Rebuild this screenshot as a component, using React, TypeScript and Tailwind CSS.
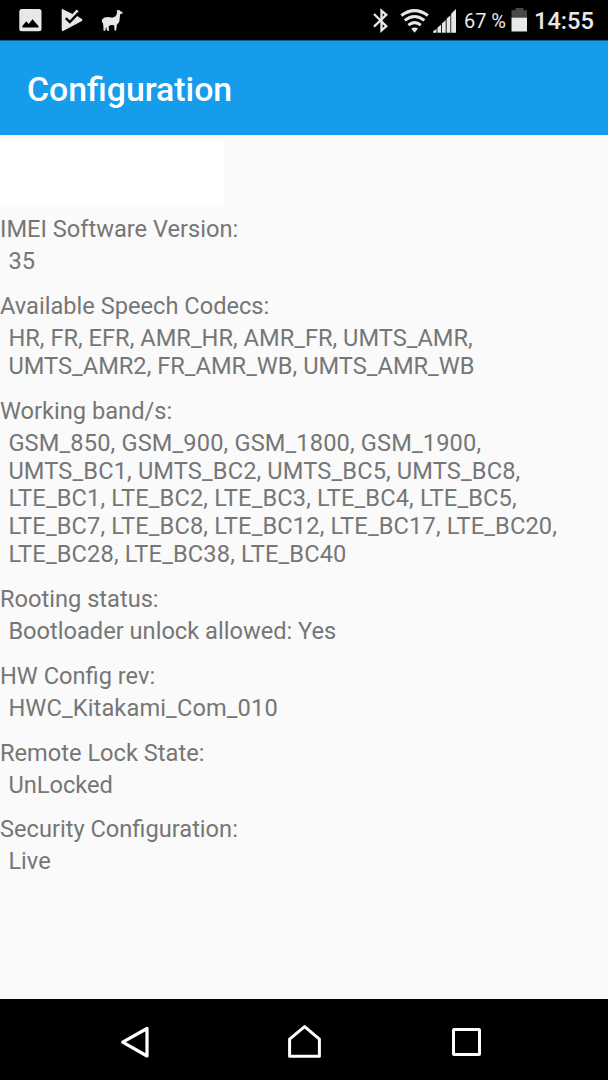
const sections = [
  { label: "IMEI Software Version:", lines: ["35"] },
  {
    label: "Available Speech Codecs:",
    lines: [
      "HR, FR, EFR, AMR_HR, AMR_FR, UMTS_AMR,",
      "UMTS_AMR2, FR_AMR_WB, UMTS_AMR_WB",
    ],
    tracking: "tracking-[0.02px]",
  },
  {
    label: "Working band/s:",
    lines: [
      "GSM_850, GSM_900, GSM_1800, GSM_1900,",
      "UMTS_BC1, UMTS_BC2, UMTS_BC5, UMTS_BC8,",
      "LTE_BC1, LTE_BC2, LTE_BC3, LTE_BC4, LTE_BC5,",
      "LTE_BC7, LTE_BC8, LTE_BC12, LTE_BC17, LTE_BC20,",
      "LTE_BC28, LTE_BC38, LTE_BC40",
    ],
    tracking: "tracking-[0.14px]",
  },
  { label: "Rooting status:", lines: ["Bootloader unlock allowed: Yes"] },
  {
    label: "HW Config rev:",
    lines: ["HWC_Kitakami_Com_010"],
    tracking: "tracking-[0.12px]",
  },
  { label: "Remote Lock State:", lines: ["UnLocked"] },
  { label: "Security Configuration:", lines: ["Live"] },
];

const StatusBar = () => {
  return (
    <div className="flex h-10 shrink-0 items-center bg-black text-[#e8e8e8]">
      <svg className="ml-[19px] h-10 w-[23px]" viewBox="19 0 23 40">
        <rect x="19.3" y="9" width="22.2" height="22.3" rx="2.5" fill="#e8e8e8" />
        <path
          d="M22.3 27.6v-1.6l4-4.7 2.4 2.8 3.8-4.8 6 6.7v1.6Z"
          fill="#000"
        />
      </svg>
      <svg className="ml-[19px] h-10 w-[22px]" viewBox="61 0 22 40">
        <path
          d="M62.8 9.2 72.6 14l4-4.4 2 2-1.8 4.2 5.1 3.3q1 1 0 1.9L63.6 30.8q-1.9.7-1.9-1V10.1q0-1.3 1.1-.9Z"
          fill="#e8e8e8"
        />
        <path
          d="m65.8 18.2 4 3.8 8.8-9.2"
          fill="none"
          stroke="#000"
          strokeWidth="2.4"
        />
      </svg>
      <svg className="ml-[17px] h-10 w-6" viewBox="100 0 24 40">
        <path
          d="m116.7 9.7 1.4.8 1.2-.8.7 1.3 2.4.9.1 1.6-2.4.7-.4 4.4-.5 3.4-2.2 2.6-.9 6h-1.6l-.3-5.3-3.4-.2-2.1 1.1.3 4.6h-1.8l-1.2-4-.7 4h-1.8l-.1-4.1-.4-3.5-1.2-1.4.3-2.2 2.3-2 4-.5 4 .6 3.2-1.4 1.5-3.2Z"
          fill="#e8e8e8"
        />
      </svg>
      <svg
        className="ml-[248px] h-10 w-[18px]"
        viewBox="372 0 18 40"
        fill="none"
        stroke="#e8e8e8"
        strokeWidth="2.3"
      >
        <path d="m374 14 12.3 12.1-4.8 4.4V10.8l4.8 4L374 26.7" />
      </svg>
      <svg className="ml-[10px] h-10 w-[30px]" viewBox="400 0 30 40">
        <g fill="none" stroke="#e8e8e8" strokeWidth="3">
          <path d="M401.3 15.5q13.2-9.7 26.6 0" />
          <path d="M404.8 20.4q9.7-7.8 19.6 0" />
          <path d="M408.4 25.1q6.2-4.9 12.4 0" />
        </g>
        <path d="M411.2 28.6q3.4-2.2 6.8 0l-3.4 4.2Z" fill="#e8e8e8" />
      </svg>
      <svg
        className="ml-[3px] h-10 w-6"
        viewBox="433 0 24 40"
        fill="#e8e8e8"
      >
        <path d="M433 32.8v-1.3l3.5-2.8v4.1ZM437.4 32.8v-5l3.7-3.4v8.4ZM442 32.8v-9.4l3.7-3.4v12.8ZM446.6 32.8V18.7l3.8-3.4v17.5ZM451.2 32.8V13.8l4.8-4.7v23.7Z" />
      </svg>
      <span className="ml-[7px] w-[41px] whitespace-nowrap pt-[2px] text-[20px] leading-[38px] tracking-[-0.1px]">
        67 %
      </span>
      <svg className="ml-[6px] h-10 w-4" viewBox="511.5 0 16 40">
        <path d="M512 10.3h4V8h8v2.3h4V18h-16Z" fill="#484848" />
        <path d="M512 17.7h16v13.8h-16Z" fill="#e8e8e8" />
      </svg>
      <span className="ml-[7px] pt-[3px] text-[23.64px] font-medium leading-[37px]">
        14:55
      </span>
    </div>
  );
};

const NavigationBar = () => {
  return (
    <div className="flex h-[81px] shrink-0 items-center bg-black pl-[120px] pt-[5px]">
      <svg
        className="h-9 w-[31px]"
        viewBox="120 1024 31 36"
        fill="none"
        stroke="#fff"
        strokeWidth="3.2"
        strokeLinejoin="round"
      >
        <path d="M147 1028.5v27.5l-24.3-13.8Z" />
      </svg>
      <svg
        className="ml-[136px] h-9 w-9"
        viewBox="287 1024 36 36"
        fill="none"
        stroke="#fff"
        strokeWidth="3"
        strokeLinejoin="round"
      >
        <path d="M289.6 1056.3v-17.2l15-12.5 14.8 12.5v17.2Z" />
      </svg>
      <div className="ml-[129px] h-7 w-[29px] rounded-[2px] border-3 border-white" />
    </div>
  );
};

const App = () => {
  return (
    <div className="flex h-[1080px] w-[608px] flex-col overflow-hidden bg-[#fafafa] font-['Roboto',sans-serif]">
      <StatusBar />
      <header className="flex h-[95px] shrink-0 items-center border-t border-[#0e5f92] bg-[#159ceb] pl-[27px] pt-[5px]">
        <h1 className="text-[33.8px] font-medium text-white">Configuration</h1>
      </header>
      <main className="grow pt-[5px] text-[23.64px] leading-[27.9px] text-[#767676]">
        <div className="mb-[9px] h-[67px] w-[224px] bg-white" />
        {sections.map((section) => (
          <section key={section.label} className="mb-[16.8px]">
            <h2>{section.label}</h2>
            <div className={`mt-[4.2px] pl-[8.4px] ${section.tracking ?? ""}`}>
              {section.lines.map((line) => (
                <p key={line} className="whitespace-nowrap">
                  {line}
                </p>
              ))}
            </div>
          </section>
        ))}
      </main>
      <NavigationBar />
    </div>
  );
};

export default App;
